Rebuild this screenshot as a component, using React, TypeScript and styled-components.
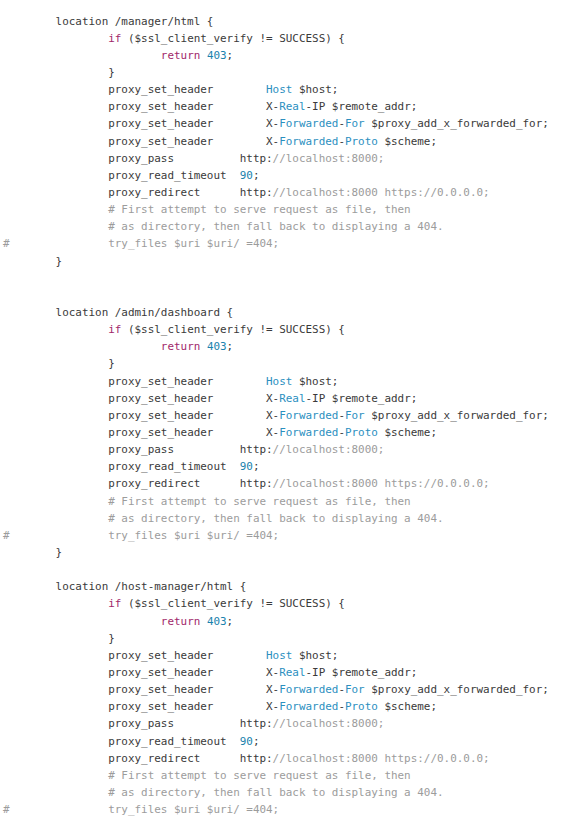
import React from "react";
import styled, { createGlobalStyle } from "styled-components";

const Global = createGlobalStyle`
  html, body {
    margin: 0;
    padding: 0;
    background: #ffffff;
    overflow: hidden;
  }
`;

const CodeBlock = styled.pre`
  margin: 0;
  padding: 12.6px 0 0 3px;
  font-family: "DejaVu Sans Mono", "Liberation Mono", monospace;
  font-size: 10.93px;
  line-height: 17.15px;
  color: #3a3a3a;
  tab-size: 8;
  -moz-tab-size: 8;
  background: #ffffff;
`;

const Line = styled.div`
  white-space: pre;
  height: 17.15px;
`;

type Kind = "txt" | "kw" | "num" | "attr" | "cmt";

const Token = styled.span<{ $kind: Kind }>`
  color: ${(p) =>
    p.$kind === "kw"
      ? "#a1286a"
      : p.$kind === "num"
      ? "#1a82ad"
      : p.$kind === "attr"
      ? "#2b8fbf"
      : p.$kind === "cmt"
      ? "#9c9c9c"
      : "inherit"};
`;

type Seg = [Kind, string];

const block = (path: string, closing: boolean): Seg[][] => {
  const out: Seg[][] = [
    [["txt", `\tlocation ${path} {`]],
    [["txt", "\t\t"], ["kw", "if"], ["txt", " ($ssl_client_verify != SUCCESS) {"]],
    [["txt", "\t\t\t"], ["kw", "return"], ["txt", " "], ["num", "403"], ["txt", ";"]],
    [["txt", "\t\t}"]],
    [["txt", "\t\tproxy_set_header\t"], ["attr", "Host"], ["txt", " $host;"]],
    [["txt", "\t\tproxy_set_header\tX-"], ["attr", "Real"], ["txt", "-IP $remote_addr;"]],
    [
      ["txt", "\t\tproxy_set_header\tX-"],
      ["attr", "Forwarded"],
      ["txt", "-"],
      ["attr", "For"],
      ["txt", " $proxy_add_x_forwarded_for;"],
    ],
    [
      ["txt", "\t\tproxy_set_header\tX-"],
      ["attr", "Forwarded"],
      ["txt", "-"],
      ["attr", "Proto"],
      ["txt", " $scheme;"],
    ],
    [["txt", "\t\tproxy_pass          http:"], ["cmt", "//localhost:8000;"]],
    [["txt", "\t\tproxy_read_timeout  "], ["num", "90"], ["txt", ";"]],
    [["txt", "\t\tproxy_redirect      http:"], ["cmt", "//localhost:8000 https://0.0.0.0;"]],
    [["cmt", "\t\t# First attempt to serve request as file, then"]],
    [["cmt", "\t\t# as directory, then fall back to displaying a 404."]],
    [["cmt", "#\t\ttry_files $uri $uri/ =404;"]],
  ];
  if (closing) out.push([["txt", "\t}"]]);
  return out;
};

const blank: Seg[] = [["txt", ""]];

const lines: Seg[][] = [
  ...block("/manager/html", true),
  blank,
  blank,
  ...block("/admin/dashboard", true),
  blank,
  ...block("/host-manager/html", false),
];

export default function App() {
  return (
    <>
      <Global />
      <CodeBlock>
        {lines.map((segs, i) => (
          <Line key={i}>
            {segs.map(([kind, text], j) =>
              kind === "txt" ? (
                <React.Fragment key={j}>{text}</React.Fragment>
              ) : (
                <Token key={j} $kind={kind}>
                  {text}
                </Token>
              )
            )}
          </Line>
        ))}
      </CodeBlock>
    </>
  );
}
